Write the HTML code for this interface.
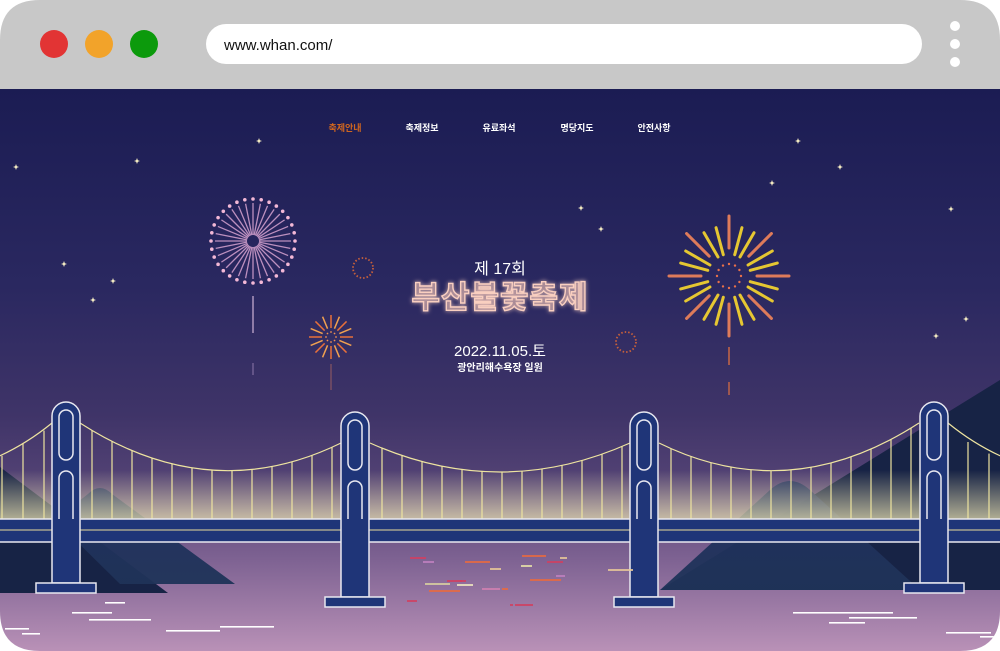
<!DOCTYPE html>
<html><head><meta charset="utf-8">
<style>
html,body{margin:0;padding:0;background:#fff;width:1000px;height:651px;overflow:hidden}
svg{display:block}
text{font-family:"Liberation Sans","Noto Sans CJK KR",sans-serif}
</style></head><body>
<svg id="s" width="1000" height="651" viewBox="0 0 1000 651" xmlns="http://www.w3.org/2000/svg">
<defs>
<linearGradient id="sky" x1="0" y1="0" x2="0" y2="1">
<stop offset="0" stop-color="#1b1c53"/>
<stop offset="0.35" stop-color="#2a2860"/>
<stop offset="0.58" stop-color="#3f3468"/>
<stop offset="0.72" stop-color="#574577"/>
<stop offset="0.84" stop-color="#7f6393"/>
<stop offset="1" stop-color="#b991b7"/>
</linearGradient>
<linearGradient id="glow" x1="0" y1="0" x2="0" y2="1">
<stop offset="0" stop-color="#e8e0b0" stop-opacity="0"/>
<stop offset="1" stop-color="#e8e0b0" stop-opacity="0.75"/>
</linearGradient>
<linearGradient id="mtn" x1="0" y1="0" x2="0" y2="1">
<stop offset="0" stop-color="#213060"/>
<stop offset="1" stop-color="#1f3358"/>
</linearGradient>
<clipPath id="win"><path d="M0 89 H1000 V611 Q1000 651 960 651 H40 Q0 651 0 611 Z"/></clipPath>
<filter id="neon" x="-20%" y="-50%" width="140%" height="200%"><feGaussianBlur stdDeviation="2" result="b"/><feMerge><feMergeNode in="b"/><feMergeNode in="SourceGraphic"/></feMerge></filter>
</defs>
<path d="M0 40 Q0 0 40 0 H960 Q1000 0 1000 40 V89 H0 Z" fill="#c8c8c8"/>
<circle cx="54" cy="44" r="14" fill="#e23434"/>
<circle cx="99" cy="44" r="14" fill="#f2a32a"/>
<circle cx="144" cy="44" r="14" fill="#0c9a0c"/>
<rect x="206" y="24" width="716" height="40" rx="20" fill="#fff"/>
<text x="224" y="50" font-size="15" fill="#111">www.whan.com/</text>
<circle cx="955" cy="26" r="5" fill="#fff"/><circle cx="955" cy="44" r="5" fill="#fff"/><circle cx="955" cy="62" r="5" fill="#fff"/>
<g clip-path="url(#win)">
<rect x="0" y="89" width="1000" height="562" fill="url(#sky)"/>
<g id="stars" fill="#fff6c8"></g>
<g id="fw"></g>
<path d="M1000 380 L660 590 L1000 590 Z" fill="#172345"/>
<path d="M660 590 L770 490 Q790 472 810 490 L920 590 Z" fill="url(#mtn)" opacity="0.95"/>
<path d="M0 467 L168 593 L0 593 Z" fill="#172345"/>
<path d="M55 520 L88 494 Q100 482 112 494 L235 584 L120 584 Z" fill="url(#mtn)" opacity="0.95"/>
<rect x="0" y="470" width="1000" height="50" fill="url(#glow)"/>
<g id="cables" fill="none" stroke="#eee4a0" stroke-width="1.2"></g>
<rect x="-5" y="519" width="1010" height="23" fill="#1f3578" stroke="#e8e8f0" stroke-width="1.5"/>
<line x1="0" y1="530" x2="1000" y2="530" stroke="#e8dc9a" stroke-width="1"/>
<g id="towers"></g>
<g id="water"></g>
</g>
<g font-size="9" font-weight="bold" text-anchor="middle" fill="#fff">
<text x="345" y="131" fill="#d0661e">축제안내</text>
<text x="422" y="131">축제정보</text>
<text x="499" y="131">유료좌석</text>
<text x="577" y="131">명당지도</text>
<text x="654" y="131">안전사항</text>
</g>
<g text-anchor="middle" fill="#fff">
<text x="500" y="274" font-size="16">제 17회</text>
<text x="500" y="308" font-size="31" font-weight="bold" fill="#f7c4b2" fill-opacity="0.25" stroke="#f9cfc0" stroke-width="1.4" filter="url(#neon)" letter-spacing="1">부산불꽃축제</text>
<text x="500" y="356" font-size="15">2022.11.05.토</text>
<text x="500" y="371" font-size="10" font-weight="bold">광안리해수욕장 일원</text>
</g>
</svg>
<script>
var NS="http://www.w3.org/2000/svg";
function el(p,t,a){var e=document.createElementNS(NS,t);for(var k in a)e.setAttribute(k,a[k]);document.getElementById(p).appendChild(e);return e;}
[[259,141],[137,161],[16,167],[64,264],[113,281],[93,300],[581,208],[601,229],[798,141],[772,183],[840,167],[951,209],[966,319],[936,336]].forEach(function(s){
 el("stars","path",{d:"M"+s[0]+" "+(s[1]-3)+" L"+(s[0]+0.8)+" "+(s[1]-0.8)+" L"+(s[0]+3)+" "+s[1]+" L"+(s[0]+0.8)+" "+(s[1]+0.8)+" L"+s[0]+" "+(s[1]+3)+" L"+(s[0]-0.8)+" "+(s[1]+0.8)+" L"+(s[0]-3)+" "+s[1]+" L"+(s[0]-0.8)+" "+(s[1]-0.8)+"Z"});
});
var cx=253,cy=241,i,a;
for(i=0;i<32;i++){a=i*Math.PI*2/32;
 el("fw","line",{x1:cx+6*Math.cos(a),y1:cy+6*Math.sin(a),x2:cx+38*Math.cos(a),y2:cy+38*Math.sin(a),stroke:"#d7a3d0","stroke-width":1.3,opacity:0.85});
 el("fw","circle",{cx:cx+42*Math.cos(a),cy:cy+42*Math.sin(a),r:1.8,fill:"#f3b8d6"});}
el("fw","line",{x1:253,y1:296,x2:253,y2:333,stroke:"#e8c8e8","stroke-width":1.3,opacity:0.8});
el("fw","line",{x1:253,y1:363,x2:253,y2:375,stroke:"#c8a8d8","stroke-width":1,opacity:0.6});
cx=331;cy=337;
for(i=0;i<16;i++){a=i*Math.PI*2/16;
 el("fw","line",{x1:cx+9*Math.cos(a),y1:cy+9*Math.sin(a),x2:cx+22*Math.cos(a),y2:cy+22*Math.sin(a),stroke:i%2?"#f0a050":"#e8703a","stroke-width":1.5});}
for(i=0;i<8;i++){a=i*Math.PI/4;el("fw","circle",{cx:cx+5*Math.cos(a),cy:cy+5*Math.sin(a),r:0.9,fill:"#f09050"});}
el("fw","line",{x1:331,y1:364,x2:331,y2:390,stroke:"#c07060","stroke-width":1,opacity:0.7});
[[363,268],[626,342]].forEach(function(c){el("fw","circle",{cx:c[0],cy:c[1],r:10,fill:"none",stroke:"#c8603a","stroke-width":1.8,"stroke-dasharray":"1.5 2"});});
cx=729;cy=276;
for(i=0;i<24;i++){a=i*Math.PI*2/24;var card=(i%3==0);
 var r1=card?28:22,r2=card?60:50;
 el("fw","line",{x1:cx+r1*Math.cos(a),y1:cy+r1*Math.sin(a),x2:cx+r2*Math.cos(a),y2:cy+r2*Math.sin(a),stroke:card?"#e8805a":"#f0d030","stroke-width":3,"stroke-linecap":"round",opacity:0.95});}
for(i=0;i<12;i++){a=i*Math.PI/6;el("fw","circle",{cx:cx+12*Math.cos(a),cy:cy+12*Math.sin(a),r:1.2,fill:"#e8704a"});}
el("fw","line",{x1:729,y1:347,x2:729,y2:365,stroke:"#e07040","stroke-width":1.3});
el("fw","line",{x1:729,y1:382,x2:729,y2:395,stroke:"#e07040","stroke-width":1.2});
function cable(x1,y1,x2,y2,ymin){
 var mx=(x1+x2)/2, cyq=2*ymin-(y1+y2)/2;
 el("cables","path",{d:"M"+x1+" "+y1+" Q"+mx+" "+cyq+" "+x2+" "+y2});
 for(var x=x1+12;x<x2-4;x+=20){var t=(x-x1)/(x2-x1);var y=(1-t)*(1-t)*y1+2*(1-t)*t*cyq+t*t*y2;
  el("cables","line",{x1:x,y1:y,x2:x,y2:519});}
}
cable(80,423,341,443,470);
cable(370,443,630,443,472);
cable(659,443,919,423,470);
el("cables","path",{d:"M52 423 Q25 445 -5 458"});
for(var x=2;x<50;x+=21){el("cables","line",{x1:x,y1:457-(x*0.6),x2:x,y2:519});}
el("cables","path",{d:"M948 423 Q975 445 1005 458"});
for(var x=968;x<1000;x+=21){el("cables","line",{x1:x,y1:431+(x-948)*0.55,x2:x,y2:519});}
function tower(cx,top,footY){
 var w=14;
 el("towers","path",{d:"M"+(cx-w)+" "+footY+" V"+(top+w)+" A"+w+" "+w+" 0 0 1 "+(cx+w)+" "+(top+w)+" V"+footY+" Z",fill:"#1f3578",stroke:"#e8e8f0","stroke-width":1.5});
 el("towers","rect",{x:cx-30,y:footY,width:60,height:10,fill:"#1f3578",stroke:"#e8e8f0","stroke-width":1.5});
 el("towers","rect",{x:cx-7,y:top+8,width:14,height:50,rx:7,fill:"none",stroke:"#e8e8f0","stroke-width":1.5});
 el("towers","path",{d:"M"+(cx-7)+" 519 V"+(top+76)+" A7 7 0 0 1 "+(cx+7)+" "+(top+76)+" V519",fill:"none",stroke:"#e8e8f0","stroke-width":1.5});
}
tower(66,402,583);tower(355,412,597);tower(644,412,597);tower(934,402,583);
[[72,612,40],[105,602,20],[89,619,62],[5,628,24],[22,633,18],[166,630,54],[220,626,54],[793,612,100],[849,617,68],[829,622,36],[946,632,45],[980,636,20]].forEach(function(l){
 el("water","rect",{x:l[0],y:l[1],width:l[2],height:1.6,fill:"#fff"});});
[[410,557,16,"#d04060"],[423,561,11,"#c080c0"],[465,561,25,"#e86a40"],[490,568,11,"#e8c898"],[522,555,24,"#e86a40"],[560,557,7,"#e8c898"],[530,579,31,"#e86a40"],[425,583,25,"#d8d0a0"],[457,584,16,"#f0e8c0"],[429,590,31,"#e86a40"],[482,588,18,"#d080b0"],[502,588,6,"#e86a40"],[521,565,11,"#e8e0a8"],[547,561,16,"#d04060"],[556,575,9,"#c080c0"],[447,580,15,"#d04060"],[460,580,6,"#d04060"],[515,604,18,"#d04060"],[510,604,3,"#d04060"],[608,569,25,"#e8c898"],[407,600,10,"#d04060"]].forEach(function(l){
 el("water","rect",{x:l[0],y:l[1],width:l[2],height:2,fill:l[3],opacity:0.85});});
</script>
</body></html>
